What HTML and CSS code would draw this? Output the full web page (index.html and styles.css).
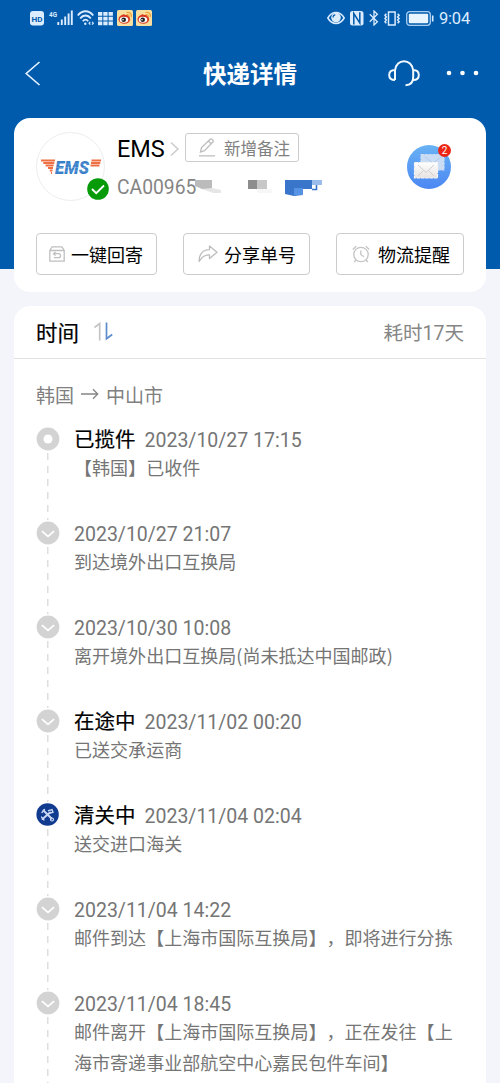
FILE: index.html
```html
<!DOCTYPE html>
<html lang="zh-CN">
<head>
<meta charset="utf-8">
<title>快递详情</title>
<link rel="stylesheet" href="styles.css">
</head>
<body>
<svg width="0" height="0" class="defs">
  <defs>
    <symbol id="weibo" viewBox="0 0 16 16">
      <rect width="16" height="16" rx="1.5" fill="#f8dfa0"/>
      <ellipse cx="7.3" cy="9.2" rx="5.8" ry="4.5" fill="#d93a20"/>
      <ellipse cx="7" cy="9.7" rx="4.3" ry="3" fill="#fff"/>
      <circle cx="6.7" cy="9.7" r="2.3" fill="#202020"/>
      <circle cx="6" cy="9.7" r=".8" fill="#fff"/>
      <path d="M9.5 4.8c1.8-.8 3.2.4 2.7 2.1M9.5 2.5c3.6-.8 5.7 1.7 4.8 4.7" fill="none" stroke="#f0a03a" stroke-width="1.2"/>
      <path d="M4 5.5 7 4l.4 1.5L10.5 5v2" fill="#d93a20"/>
    </symbol>
    <symbol id="check" viewBox="0 0 24 24">
      <circle cx="12" cy="12" r="11.4" fill="#d3d3d3"/>
      <path d="m5.9 10.1 6.1 5.3 6.1-5.3" fill="none" stroke="#fff" stroke-width="1.7"/>
    </symbol>
  </defs>
</svg>
<div class="screen">
  <header class="status">
    <div class="status-left">
      <svg width="15" height="15" viewBox="0 0 15 15"><rect width="14" height="14.5" rx="3" fill="#dcecff"/><text x="7" y="10.6" text-anchor="middle" textLength="11" lengthAdjust="spacingAndGlyphs" class="hd">HD</text></svg>
      <svg class="signal" width="24" height="17" viewBox="0 0 24 17"><text x="0" y="7.500" textLength="8" lengthAdjust="spacingAndGlyphs" class="net">4G</text><path d="M9.3 13v3M12.8 10.5V16M16.2 7.5V16M19.6 4.5V16M22.8 1.5V16" stroke="#dcecff" stroke-width="1.9"/></svg>
      <svg class="wifi" width="18" height="16" viewBox="0 0 18 16" fill="none" stroke="#dcecff" stroke-width="1.8"><path d="M.8 5.5C5-.2 12-.2 16.200 5.500M3.200 8.500c3-4 7.600-4 10.600 0M5.800 11.300c1.700-2.200 3.700-2.200 5.400 0"/><circle cx="8.300" cy="13.800" r="1.200" fill="#dcecff" stroke="none"/><path d="m13.300 11.800-1.200 1.400 1.200 1.400m1.800-2.800 1.200 1.400-1.200 1.400" stroke-width="1.200"/></svg>
      <svg class="grid" width="15" height="15" viewBox="0 0 15 15" fill="#dcecff"><path d="M0 1h4.300v3.700H0zM5.300 1h4.300v3.700H5.300zM10.600 1h4.300v3.700h-4.300zM0 5.800h4.300v3.700H0zM5.300 5.800h4.300v3.700H5.300zM10.600 5.800h4.300v3.700h-4.300zM0 10.600h4.300v3.700H0zM5.300 10.600h4.300v3.700H5.300zM10.600 10.600h4.300v3.700h-4.300z"/></svg>
      <svg class="app" width="16" height="16"><use href="#weibo"/></svg>
      <svg class="app" width="16" height="16"><use href="#weibo"/></svg>
    </div>
    <div class="status-right">
      <svg width="18" height="14" viewBox="0 0 18 14"><path d="M.8 7C5-.2 13-.2 17.200 7 13 14.200 5 14.200.8 7z" fill="none" stroke="#dcecff" stroke-width="1.500"/><circle cx="9" cy="6.600" r="4.800" fill="#dcecff"/><path d="M6 6.500c0-1.500.8-2.400 2.300-2.600" fill="none" stroke="#005bac" stroke-width="1.200"/></svg>
      <svg class="nfc" width="14" height="15" viewBox="0 0 14 15"><rect width="13.500" height="14.500" rx="2.500" fill="#dcecff"/><path d="M3.800 13.500V2.500l6 9.500V1.200" fill="none" stroke="#005bac" stroke-width="1.500"/></svg>
      <svg class="bt" width="10" height="16" viewBox="0 0 10 16"><path d="m.8 4.200 7.600 7.500L5 15V1l3.400 3.300L.8 11.800" fill="none" stroke="#dcecff" stroke-width="1.300"/></svg>
      <svg class="vib" width="18" height="15" viewBox="0 0 18 15"><path d="M5.500.9h6.600v13.200H5.500zM3.300 2.800 2 4.300 3.300 6 2 7.500 3.300 9 2 10.700l1.300 1.500M14.600 2.800l1.500 1.500L14.600 6l1.500 1.500L14.600 9l1.500 1.700-1.500 1.500" fill="none" stroke="#dcecff" stroke-width="1.500"/></svg>
      <svg class="battery" width="28" height="15" viewBox="0 0 28 15"><rect x=".7" y=".7" width="23.600" height="13.600" rx="3" fill="none" stroke="#a9cdf2" stroke-width="1.300"/><rect x="2.800" y="2.800" width="19.400" height="9.400" rx="1" fill="#e8f4ff"/><path d="M26.700 4.500v6" stroke="#dcecff" stroke-width="1.600"/></svg>
      <span class="clock">9:04</span>
    </div>
  </header>

  <nav class="nav">
    <svg class="back" width="16" height="25" viewBox="0 0 16 25"><path d="M14.500 1 1.200 12.500 14.500 24" fill="none" stroke="#e8f4ff" stroke-width="1.600"/></svg>
    <h1 class="title">快递详情</h1>
    <div class="nav-actions">
      <svg width="32" height="27" viewBox="0 0 32 27" fill="none" stroke="#f2faff" stroke-width="2"><path d="M7 20V10.500C8-2 24-2 25.200 10.500V17c0 5-2 8.200-7.700 8.200M7 10C3 10 1.200 12 1.200 15S3 20 7 20M25.200 10c4 0 5.600 2 5.600 5s-1.600 5-5.600 5"/></svg>
      <svg class="more" width="34" height="6" viewBox="0 0 34 6" fill="#fff"><circle cx="3" cy="3" r="2.300"/><circle cx="16.500" cy="3" r="2.300"/><circle cx="30" cy="3" r="2.300"/></svg>
    </div>
  </nav>

  <section class="card parcel">
    <div class="carrier">
      <div class="avatar">
        <svg class="logo" width="60" height="24" viewBox="0 -4 60 24">
          <g stroke="#ee7044" stroke-width="2"><path d="M0 1.500h14M2.300 4h11M4.600 6.500h8M7 9h5M8.800 11.500h2.700M10 14h1M50.500 1.500h9.500M50 4h9.300M49.500 6.500h9"/></g>
          <text x="14" y="15" textLength="34" lengthAdjust="spacingAndGlyphs" class="logo-word">EMS</text>
          <path d="M14 5h35M14 8.500h35M14 12h35" stroke="#fff" stroke-width=".4" opacity=".5"/>
        </svg>
        <svg class="verified" width="22" height="22" viewBox="0 0 22 22"><circle cx="11" cy="11" r="10.800" fill="#079a09"/><path d="m5 11 4.200 4.100L17 7.500" fill="none" stroke="#fff" stroke-width="1.900"/></svg>
      </div>
      <div class="identity">
        <div class="name-row">
          <span class="carrier-name">EMS</span>
          <svg class="chev" width="10" height="16" viewBox="0 0 10 16"><path d="m1 1.500 7 6.500-7 6.500" fill="none" stroke="#ccc" stroke-width="1.500"/></svg>
          <button class="note"><svg width="18" height="19" viewBox="0 0 18 19" fill="none" stroke="#bdbdbd" stroke-width="1.300"><path d="m2.500 14 1-4.500 8.700-8.300c1.200-1 3.900 1.500 2.700 2.800L6.500 12.700zM10.500 3l2.700 2.700M1 17.800h16"/></svg>新增备注</button>
        </div>
        <div class="number-row">
          <span class="number">CA00965</span>
          <svg class="mosaic" width="128" height="20" viewBox="0 0 128 20"><path d="M0 3h17v9H7l-7-3z" fill="#bbb"/><path d="m7 12 10-1 9 2v3H18z" fill="#e6e6e6"/><path d="M53 3h9v9h-9z" fill="#8d8d8d"/><path d="M62 3h10v9H62z" fill="#c7c7c7"/><path d="M60 12h17v4H63z" fill="#f7f7f7"/><path d="M90 3h27v9h-9v6l-9 1-9-2z" fill="#3976cb"/><path d="M99 11h9v7h-9z" fill="#5793e5"/><path d="M117 3h10v5h-10z" fill="#9bbdec"/><path d="M121.500 8v4.500H117" fill="none" stroke="#3976cb" stroke-width="1.600"/></svg>
        </div>
      </div>
      <div class="mail">
        <svg width="44" height="44" viewBox="0 0 44 44">
          <defs>
            <linearGradient id="sky" x2="0" y2="1"><stop stop-color="#69b2f4"/><stop offset="1" stop-color="#4b87f3"/></linearGradient>
            <linearGradient id="paper" x2="0" y2="1"><stop stop-color="#fff"/><stop offset="1" stop-color="#e6e2e0"/></linearGradient>
          </defs>
          <circle cx="22" cy="22" r="22" fill="url(#sky)"/>
          <path d="M14 9.500h23v15.500H14z" fill="#c9dcf3" stroke="#c9dcf3" stroke-width="1.200" stroke-dasharray="3 .8"/>
          <path d="m18 12 8 6 8-6" fill="none" stroke="#b2cbec"/>
          <path d="M7.500 17.500h23v15.500h-23z" fill="url(#paper)" stroke="#f6f5f5" stroke-width="1.200" stroke-dasharray="3.500 .8"/>
          <path d="m11 20 8 7.500 8-7.500M11 31l5-5M27 31l-5-5" fill="none" stroke="#d0cdd0" stroke-width="1"/>
        </svg>
        <span class="badge">2</span>
      </div>
    </div>
    <div class="actions">
      <button class="action action-return"><svg width="16" height="16" viewBox="0 0 16 16" fill="none" stroke="#c0c0c0" stroke-width="1.300"><path d="M.8 4.500 3 .8h10l2.200 3.700v10.700H.8zM.8 4.500h14.400M4.500 7.700H9.500c2.700 0 2.700 4 0 4H5M6.500 5.900 4.500 7.700l2 1.900"/></svg>一键回寄</button>
      <button class="action action-share"><svg width="20" height="18" viewBox="0 0 20 18"><path d="M11.500 1 19 7.300l-7.500 6.200V9.900C6.500 9.500 4 11.500 1.200 16.500.8 9.500 4.500 4.900 11.500 4.700z" fill="none" stroke="#bdbdbd" stroke-width="1.300" stroke-linejoin="round"/></svg>分享单号</button>
      <button class="action action-alarm"><svg width="18" height="18" viewBox="0 0 18 18" fill="none" stroke="#c4c4c4" stroke-width="1.300"><circle cx="9" cy="9.500" r="7.200"/><path d="M8.800 5.500v4l3.200 2.300M.8 4.500 4.200 1.200M17.200 4.500l-3.400-3.300M3.800 15l-1.500 2M14.200 15l1.500 2"/></svg>物流提醒</button>
    </div>
  </section>

  <section class="card tracking">
    <div class="tracking-head">
      <h2 class="heading">时间</h2>
      <svg class="sort" width="20" height="19" viewBox="0 0 20 19" fill="none" stroke-width="1.700"><path d="M.5 5.500 5.700 1.500v17" stroke="#c5c5c5"/><path d="M12.500.5v16.300l5.700-4.300" stroke="#5d8dcc"/></svg>
      <span class="elapsed">耗时17天</span>
    </div>
    <div class="route">韩国<svg width="18" height="12" viewBox="0 0 18 12"><path d="M0 6h16.500M12 1.300 16.700 6 12 10.700" fill="none" stroke="#858585" stroke-width="1.300"/></svg>中山市</div>
    <ol class="timeline">
      <li class="event"><svg class="node" viewBox="0 0 24 24"><circle cx="12" cy="12" r="11.400" fill="#d3d3d3"/><circle cx="12" cy="12" r="4.500" fill="#fff"/></svg><div class="line"><b class="state">已揽件</b><time class="date">2023/10/27 17:15</time></div><p class="desc">【韩国】已收件</p></li>
      <li class="event"><svg class="node"><use href="#check"/></svg><div class="line"><time class="date">2023/10/27 21:07</time></div><p class="desc">到达境外出口互换局</p></li>
      <li class="event"><svg class="node"><use href="#check"/></svg><div class="line"><time class="date">2023/10/30 10:08</time></div><p class="desc">离开境外出口互换局(尚未抵达中国邮政)</p></li>
      <li class="event"><svg class="node"><use href="#check"/></svg><div class="line"><b class="state">在途中</b><time class="date">2023/11/02 00:20</time></div><p class="desc">已送交承运商</p></li>
      <li class="event"><svg class="node" viewBox="0 0 24 24"><circle cx="11.600" cy="11.500" r="11.200" fill="#103b8f"/><g fill="none" stroke="#c9d7f3" stroke-linecap="round"><path d="m7.500 7.500 8 8M6.500 16 14 9.500" stroke-width="2"/><path d="m6 9.500 2.500-3M12.500 7.700l3.500-1 1 2.500-3 1" stroke-width="1.400"/><circle cx="16" cy="16.500" r="1.500" stroke-width="1.200"/><path d="m5.500 14 2.500 3" stroke-width="1.200"/></g></svg><div class="line"><b class="state">清关中</b><time class="date">2023/11/04 02:04</time></div><p class="desc">送交进口海关</p></li>
      <li class="event"><svg class="node"><use href="#check"/></svg><div class="line"><time class="date">2023/11/04 14:22</time></div><p class="desc">邮件到达【上海市国际互换局】，即将进行分拣</p></li>
      <li class="event"><svg class="node"><use href="#check"/></svg><div class="line"><time class="date">2023/11/04 18:45</time></div><p class="desc">邮件离开【上海市国际互换局】，正在发往【上海市寄递事业部航空中心嘉民包件车间】</p></li>
    </ol>
  </section>
</div>
</body>
</html>
```
FILE: styles.css
```css
* { box-sizing: border-box; }
body { margin: 0; font-family: Roboto, "Noto Sans CJK SC", sans-serif; text-spacing-trim: space-all; }
svg { display: block; flex: none; }
.defs { position: absolute; }
.screen { height: 1083px; overflow: hidden; background: linear-gradient(#005bac 269px, #f4f5fa 269px); }

.status { display: flex; justify-content: space-between; height: 36px; padding: 0 30px; align-items: center; }
.status-left, .status-right { display: flex; align-items: center; }
.signal { margin-left: 4px; margin-top: -2px; }
.wifi { margin-left: 4px; }
.grid { margin-left: 3px; }
.app { margin-left: 3.500px; }
.hd { font: 700 8px Roboto, sans-serif; fill: #005bac; }
.net { font: 700 7px Roboto, sans-serif; fill: #dcecff; }
.nfc { margin-left: 5px; }
.bt { margin-left: 5px; }
.vib { margin-left: 4px; }
.battery { margin-left: 5px; }
.clock { margin-left: 5px; margin-top: 1px; font-size: 16.500px; line-height: 20px; color: #dcecff; letter-spacing: -.2px; }

.nav { display: grid; grid-template-columns: 1fr auto 1fr; align-items: center; height: 74px; padding: 0 22px 0 25px; }
.title { margin: 3px 0 0 -3px; font-size: 23.500px; line-height: 32px; font-weight: 700; color: #fff; }
.nav-actions { display: flex; justify-content: flex-end; align-items: center; gap: 26px; margin-right: -2px; }

.card { margin: 0 14px; background: #fff; }
.parcel { height: 174px; margin-top: 8px; padding: 14px 22px 0; border-radius: 16px; }
.carrier { display: flex; height: 70px; }
.avatar { position: relative; display: flex; align-items: center; justify-content: center; width: 69px; height: 69px; border: 1px solid #ededf0; border-radius: 50%; }
.verified { position: absolute; right: -5px; bottom: 0; }
.logo { overflow: visible; }
.logo-word { font: italic 900 19px Roboto, sans-serif; fill: #397fc9; }
.identity { margin-left: 12px; }
.name-row { display: flex; align-items: center; height: 33px; }
.carrier-name { width: 48px; margin-top: 1px; font-size: 23.500px; line-height: 30px; color: #000; }
.chev { margin-left: 5px; margin-right: 5px; }
.note { display: flex; align-items: center; gap: 8px; width: 114px; height: 29px; margin: -2px 0 0; padding: 0 0 0 12px; border: 1.500px solid #ccc; border-radius: 3px; background: #fff; font: 16.500px/24px "Noto Sans CJK SC", sans-serif; color: #808080; white-space: nowrap; }
.number-row { display: flex; align-items: center; height: 40px; }
.number { width: 78px; margin-top: 5px; font-size: 19.300px; line-height: 28px; color: #858585; }
.mosaic { margin-top: 4px; }
.mail { position: relative; margin-left: auto; margin-right: 13px; padding-top: 13px; height: 57px; }
.badge { position: absolute; top: 12px; right: 0; width: 13px; height: 13px; border-radius: 50%; background: #ed2514; color: #fff; font-size: 10px; line-height: 13px; text-align: center; }
.actions { display: flex; justify-content: space-between; margin-top: 31px; }
.action { display: flex; align-items: center; height: 42px; padding: 0; border: 1.500px solid #ccc; border-radius: 4px; background: #fff; font: 18px/26px "Noto Sans CJK SC", sans-serif; color: #000; white-space: nowrap; }
.action-return { width: 121px; padding-left: 12px; gap: 6px; }
.action-share { width: 127px; padding-left: 14px; gap: 6px; }
.action-alarm { width: 128px; padding-left: 15px; gap: 8px; }

.tracking { min-height: 780px; margin-top: 14px; border-radius: 16px 16px 0 0; }
.tracking-head { display: flex; align-items: center; height: 52.500px; padding: 0 22px; border-bottom: 1.500px solid #e2e2e2; }
.heading { margin: 5px 0 0; font-size: 21.500px; line-height: 30px; font-weight: 400; color: #000; -webkit-text-stroke: .2px #000; }
.sort { margin-left: 15px; }
.elapsed { margin: 5px 0 0 auto; font-size: 19.500px; line-height: 26px; color: #858585; }
.route { display: flex; align-items: center; gap: 7px; height: 29px; margin-top: 21px; padding-left: 22px; font-size: 19px; color: #808080; }
.timeline { margin: 17px 0 0; padding: 0 0 0 22px; list-style: none; }
.event { display: grid; grid-template-columns: 24px 380px; column-gap: 14px; align-content: start; height: 94px; background: repeating-linear-gradient(#dedede 0 7px, transparent 7px 13px) 11px 27px / 1.500px 100% no-repeat; }
.event:last-child { height: 140px; }
.node { width: 24px; height: 24px; margin-top: 1px; }
.line { display: flex; align-items: center; gap: 9px; height: 27px; }
.state { margin-top: 2px; font-size: 20.500px; line-height: 27px; font-weight: 400; color: #000; -webkit-text-stroke: .2px #000; }
.date { margin-top: 2px; font-size: 19.500px; line-height: 27px; color: #757575; white-space: nowrap; }
.desc { grid-column: 2; margin: -1px 0 0; font: 18.050px/31px "Noto Sans CJK SC", sans-serif; color: #757575; }
```
